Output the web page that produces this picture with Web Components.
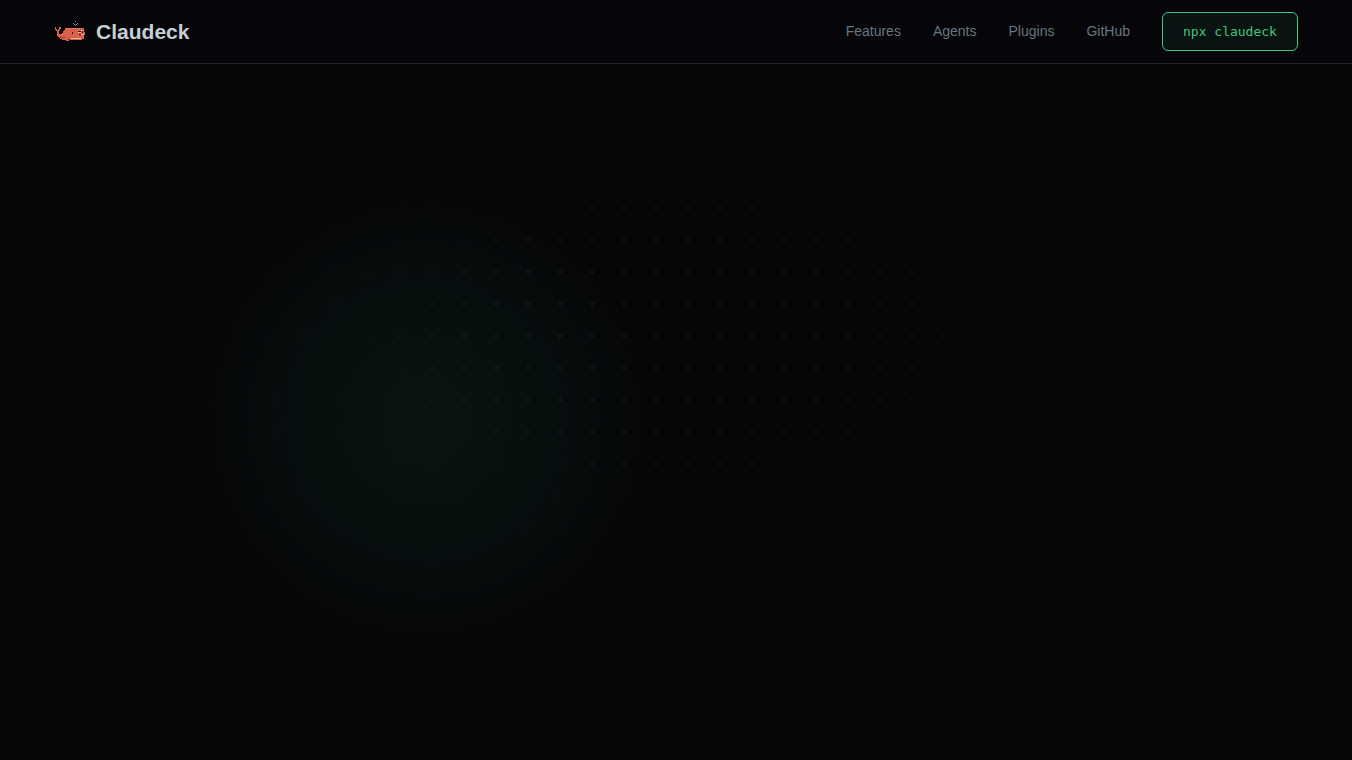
<!DOCTYPE html>
<html lang="en">
<head>
<meta charset="utf-8">
<meta name="viewport" content="width=device-width, initial-scale=1">
<title>Claudeck</title>
<style>
:root {
  --bg: #060608;
  --nav-bg: #06060a;
  --line: #222226;
  --text: #c8ced6;
  --muted: #68747f;
  --green: #3fc67c;
  --mono: "DejaVu Sans Mono", monospace;
}

html { background: #000; }

body {
  margin: 0;
  min-height: 100vh;
  display: flex;
  flex-direction: column;
  color: var(--text);
  font-family: "Liberation Sans", Arial, sans-serif;
}

hero-stage { flex: 1; }
</style>
</head>
<body>
<site-nav>
  <brand-mark slot="brand">Claudeck</brand-mark>
  <nav-link href="#features">Features</nav-link>
  <nav-link href="#agents">Agents</nav-link>
  <nav-link href="#plugins">Plugins</nav-link>
  <nav-link href="#github">GitHub</nav-link>
  <copy-command slot="action">npx claudeck</copy-command>
</site-nav>
<hero-stage></hero-stage>

<script>
class SiteNav extends HTMLElement {
  constructor() {
    super();
    this.attachShadow({ mode: 'open' }).innerHTML = `
      <style>
      :host {
        display: block;
        background: var(--nav-bg);
        border-bottom: 1px solid var(--line);
      }

      header, nav {
        display: flex;
        align-items: center;
      }

      header {
        justify-content: space-between;
        padding: 12px 4%;
      }

      nav { gap: 32px; }
      </style>
      <header>
        <slot name="brand"></slot>
        <nav>
          <slot></slot>
          <slot name="action"></slot>
        </nav>
      </header>
    `;
  }
}

class BrandMark extends HTMLElement {
  constructor() {
    super();
    this.attachShadow({ mode: 'open' }).innerHTML = `
      <style>
      :host { display: block; }

      a {
        display: flex;
        align-items: center;
        gap: 10px;
        color: inherit;
        text-decoration: none;
        font-size: 21px;
        font-weight: 700;
        line-height: 24px;
      }

      svg { display: block; width: 32px; height: 32px; }
      </style>
      <a href="#top">
        <svg viewBox="0 0 32 32" shape-rendering="crispEdges" aria-hidden="true">
          <!-- spout -->
          <path fill="#5fa9c0" d="M19 7h1v1h-1zM23 7h1v1h-1zM21 5h1v1h-1zM20 8h1v1h-1zM22 8h1v1h-1zM21 9h1v1h-1z"/>
          <!-- body and tail -->
          <path fill="#d9604b" d="M11 12h19v3h1v4h-1v4h-2v1H15v1h-3v-1H8v-1H6v-1H5v-1H4v-1H3v-4h2v2h3v-1h1v-2h1v-1h1z"/>
          <path fill="#c4655a" d="M1 11h1v2h1v1h1v-1h1v-2h2v2H6v1H5v2H3v-1H2v-1H1z"/>
          <path fill="#e57763" d="M12 12h14v1H12z"/>
          <path fill="#9c3d35" d="M6 21h5v1H6zM13 23h4v1h-4z"/>
          <!-- eye, cheek and mouth -->
          <path fill="#2a1216" d="M18 16h1v2h-1zM24 15h3v1h-3zM25 18h2v1h-2zM28 15h1v2h-1zM30 14h1v2h-1z"/>
          <path fill="#f3b79f" d="M24 16h3v1h-3zM27 14h2v1h-2zM27 18h3v1h-3zM17 22h10v1H17z"/>
        </svg>
        <slot></slot>
      </a>
    `;
  }
}

class NavLink extends HTMLElement {
  constructor() {
    super();
    this.attachShadow({ mode: 'open' }).innerHTML = `
      <style>
      :host { display: block; }

      a {
        display: block;
        padding-bottom: 2px;
        color: var(--muted);
        font-size: 14px;
        line-height: 16px;
        text-decoration: none;
      }

      a:hover { color: var(--text); }
      </style>
      <a><slot></slot></a>
    `;
  }

  connectedCallback() {
    this.shadowRoot.querySelector('a').href = this.getAttribute('href');
  }
}

class CopyCommand extends HTMLElement {
  constructor() {
    super();
    this.attachShadow({ mode: 'open' }).innerHTML = `
      <style>
      :host { display: block; }

      button {
        display: block;
        padding: 11px 20px;
        border: 1px solid var(--green);
        border-radius: 6px;
        background: #091311;
        color: var(--green);
        font-family: var(--mono);
        font-size: 13px;
        line-height: 15px;
        cursor: pointer;
      }
      </style>
      <button type="button"><slot></slot></button>
    `;
    this._onClick = this._onClick.bind(this);
  }

  connectedCallback() {
    this.addEventListener('click', this._onClick);
  }

  disconnectedCallback() {
    this.removeEventListener('click', this._onClick);
  }

  _onClick() {
    navigator.clipboard?.writeText(this.textContent.trim());
  }
}

class HeroStage extends HTMLElement {
  constructor() {
    super();
    this.attachShadow({ mode: 'open' }).innerHTML = `
      <style>
      :host {
        display: grid;
        background: var(--bg);
        overflow: hidden;
      }

      .glow, .dots { grid-area: 1 / 1; }

      .glow {
        background: radial-gradient(circle 225px at 31.5% 51%,
          rgba(51, 209, 122, 0.07), rgba(30, 180, 140, 0.045) 60%, transparent);
      }

      .dots {
        background: radial-gradient(circle, rgba(255, 255, 255, 0.08) 1px, transparent 2px) 0 0 / 32px 32px;
        mask-image: radial-gradient(ellipse 46% 46% at 50% 39%, #000 30%, transparent);
      }
      </style>
      <div class="glow"></div>
      <div class="dots"></div>
    `;
  }
}

customElements.define('site-nav', SiteNav);
customElements.define('brand-mark', BrandMark);
customElements.define('nav-link', NavLink);
customElements.define('copy-command', CopyCommand);
customElements.define('hero-stage', HeroStage);
</script>
</body>
</html>
